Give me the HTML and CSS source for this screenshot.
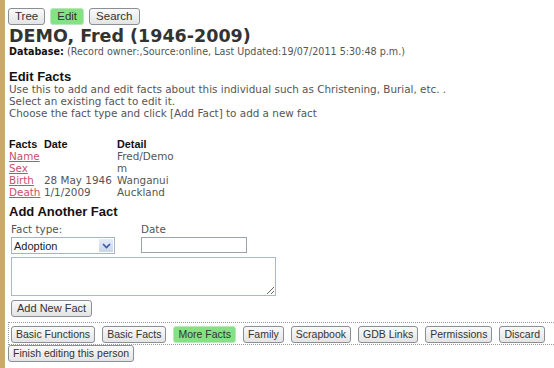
FILE: index.html
```html
<!DOCTYPE html>
<html lang="en">
<head>
    <meta charset="UTF-8">
    <title>Edit Facts - DEMO, Fred</title>
    <link rel="stylesheet" href="styles.css">
</head>
<body>
    <div class="page">
        <div class="top-buttons">
            <button class="btn">Tree</button>
            <button class="btn btn-active">Edit</button>
            <button class="btn">Search</button>
        </div>

        <h1 class="person-name">DEMO, Fred (1946-2009)</h1>
        <div class="database"><b>Database:</b> (Record owner:,Source:online, Last Updated:19/07/2011 5:30:48 p.m.)</div>

        <h2 class="section-title">Edit Facts</h2>
        <p class="intro">
            Use this to add and edit facts about this individual such as Christening, Burial, etc. .<br>
            Select an existing fact to edit it.<br>
            Choose the fact type and click [Add Fact] to add a new fact
        </p>

        <table class="facts">
            <tr>
                <th class="col-fact">Facts</th>
                <th class="col-date">Date</th>
                <th>Detail</th>
            </tr>
            <tr><td><a href="#">Name</a></td><td></td><td>Fred/Demo</td></tr>
            <tr><td><a href="#">Sex</a></td><td></td><td>m</td></tr>
            <tr><td><a href="#">Birth</a></td><td>28 May 1946</td><td>Wanganui</td></tr>
            <tr><td><a href="#">Death</a></td><td>1/1/2009</td><td>Auckland</td></tr>
        </table>

        <h2 class="section-title add-title">Add Another Fact</h2>
        <div class="add-form">
            <div class="form-row">
                <div class="field field-type">
                    <label>Fact type:</label>
                    <div class="select">
                        <span>Adoption</span>
                        <span class="select-arrow">
                            <svg width="9" height="6" viewBox="0 0 9 6"><path d="M1 1 L4.5 4.5 L8 1" fill="none" stroke="#3b5a9a" stroke-width="1.6"/></svg>
                        </span>
                    </div>
                </div>
                <div class="field field-date">
                    <label>Date</label>
                    <input type="text" class="date-input">
                </div>
            </div>
            <textarea class="detail-input"></textarea>
            <button class="btn add-btn">Add New Fact</button>
        </div>

        <div class="tab-bar">
            <button class="btn">Basic Functions</button>
            <button class="btn">Basic Facts</button>
            <button class="btn btn-active">More Facts</button>
            <button class="btn">Family</button>
            <button class="btn">Scrapbook</button>
            <button class="btn">GDB Links</button>
            <button class="btn">Permissions</button>
            <button class="btn">Discard</button>
        </div>
        <button class="btn finish">Finish editing this person</button>
    </div>
</body>
</html>
```

FILE: styles.css
```css
body {
    margin: 0;
    background-color: white;
    font-family: "DejaVu Sans", Verdana, sans-serif;
    font-size: 10.4px;
    color: #555;
}
.page {
    border-left: 5px solid #c8a972;
    min-height: 368px;
    padding: 8px 0 0 3px;
    box-sizing: border-box;
}
.btn {
    font-family: "Liberation Sans", Arial, sans-serif;
    font-size: 10.5px;
    color: #333;
    height: 17px;
    padding: 0 4px;
    background: linear-gradient(#fafafa, #e4e4e4);
    border: 1px solid #8a8f96;
    border-radius: 3px;
    margin: 0;
    line-height: 15px;
    white-space: nowrap;
    flex-shrink: 0;
}
.btn-active {
    background: #84e284;
    border-color: #b9e8b9;
}
.top-buttons {
    display: flex;
    gap: 5px;
}
.top-buttons .btn {
    font-size: 11.5px;
    padding: 0 6px;
}
.person-name {
    margin: 1px 0 0 1px;
    font-size: 17.5px;
    line-height: 20px;
    color: #333;
}
.database {
    margin-left: 1px;
    font-size: 9.6px;
    line-height: 12px;
}
.database b {
    color: #111;
}
.section-title {
    font-family: "Liberation Sans", Arial, sans-serif;
    font-size: 13px;
    line-height: 14px;
    color: #111;
    margin: 12px 0 0 1px;
}
.intro {
    margin: -1px 0 19px 1px;
    line-height: 12px;
}
.facts {
    border-collapse: collapse;
    margin-left: 1px;
    line-height: 12px;
}
.facts th {
    text-align: left;
    font-family: "Liberation Sans", Arial, sans-serif;
    font-size: 10.8px;
    color: #111;
    padding: 0;
}
.facts td {
    padding: 0;
}
.col-fact {
    width: 35px;
}
.col-date {
    width: 73px;
}
.facts a {
    color: #c8506e;
}
.add-title {
    margin-top: 7px;
}
.add-form {
    padding: 3px 0 0 3px;
}
.form-row {
    display: flex;
    gap: 26px;
}
.field label {
    display: block;
    line-height: 14px;
}
.select {
    width: 100px;
    height: 15px;
    border: 1px solid #a5b5c8;
    margin-top: 1px;
    display: flex;
    align-items: center;
    justify-content: space-between;
    font-family: "Liberation Sans", Arial, sans-serif;
    font-size: 11px;
    color: #222;
    padding-left: 2px;
}
.select-arrow {
    width: 14px;
    height: 13px;
    margin-right: 1px;
    background: linear-gradient(#e6ecf8, #c9d5ef);
    display: flex;
    align-items: center;
    justify-content: center;
}
.date-input {
    width: 100px;
    height: 12px;
    border: 1px solid #9aa3ad;
    margin: 1px 0 0 0;
}
.detail-input {
    display: block;
    width: 259px;
    height: 33px;
    border: 1px solid #a9b9cb;
    margin: 3px 0 4px 0;
    padding: 2px;
}
.add-btn {
    display: block;
    font-size: 11px;
    padding: 0 5px;
}
.tab-bar {
    margin-top: 5px;
    border: 1px dotted #999;
    border-right: none;
    padding: 3px 0 1px 2px;
    display: flex;
    gap: 7px;
}
```
